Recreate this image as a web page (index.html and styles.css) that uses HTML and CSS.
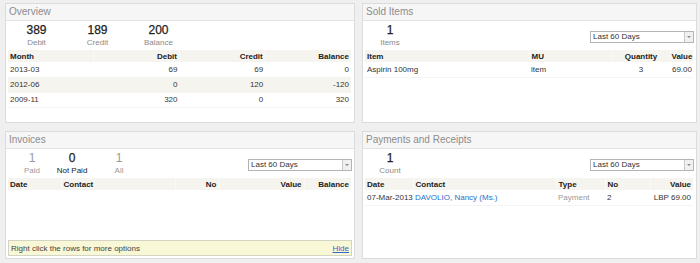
FILE: index.html
```html
<!DOCTYPE html>
<html lang="en">
<head>
    <meta charset="UTF-8">
    <title>Dashboard</title>
    <link rel="stylesheet" href="styles.css">
</head>
<body>
    <div class="dashboard">
        <!-- Overview -->
        <section class="panel">
            <div class="panel-title">Overview</div>
            <div class="toolbar">
                <div class="stats stats-overview">
                    <div class="stat"><b>389</b><span>Debit</span></div>
                    <div class="stat"><b>189</b><span>Credit</span></div>
                    <div class="stat"><b>200</b><span>Balance</span></div>
                </div>
            </div>
            <table class="grid grid-overview">
                <thead>
                    <tr><th>Month</th><th class="num">Debit</th><th class="num">Credit</th><th class="num">Balance</th></tr>
                </thead>
                <tbody>
                    <tr><td>2013-03</td><td class="num">69</td><td class="num">69</td><td class="num">0</td></tr>
                    <tr class="alt"><td>2012-06</td><td class="num">0</td><td class="num">120</td><td class="num">-120</td></tr>
                    <tr><td>2009-11</td><td class="num">320</td><td class="num">0</td><td class="num">320</td></tr>
                </tbody>
            </table>
        </section>

        <!-- Sold Items -->
        <section class="panel">
            <div class="panel-title">Sold Items</div>
            <div class="toolbar">
                <div class="stats stats-single">
                    <div class="stat"><b>1</b><span>Items</span></div>
                </div>
                <div class="select"><span>Last 60 Days</span><i></i></div>
            </div>
            <table class="grid grid-sold">
                <colgroup><col class="c-item"><col class="c-mu"><col class="c-qty"><col></colgroup>
                <thead>
                    <tr><th>Item</th><th>MU</th><th class="mid">Quantity</th><th class="num">Value</th></tr>
                </thead>
                <tbody>
                    <tr><td>Aspirin 100mg</td><td>item</td><td class="mid">3</td><td class="num">69.00</td></tr>
                </tbody>
            </table>
        </section>

        <!-- Invoices -->
        <section class="panel">
            <div class="panel-title">Invoices</div>
            <div class="toolbar">
                <div class="stats stats-invoices">
                    <div class="stat stat-paid"><b>1</b><span>Paid</span></div>
                    <div class="stat stat-notpaid active"><b>0</b><span>Not Paid</span></div>
                    <div class="stat stat-all"><b>1</b><span>All</span></div>
                </div>
                <div class="select"><span>Last 60 Days</span><i></i></div>
            </div>
            <table class="grid grid-invoices">
                <colgroup><col class="c-date"><col class="c-contact"><col class="c-no"><col class="c-value"><col></colgroup>
                <thead>
                    <tr><th>Date</th><th>Contact</th><th class="num">No</th><th class="num">Value</th><th class="num">Balance</th></tr>
                </thead>
            </table>
            <div class="hint">
                <span>Right click the rows for more options</span>
                <a href="#">Hide</a>
            </div>
        </section>

        <!-- Payments and Receipts -->
        <section class="panel">
            <div class="panel-title">Payments and Receipts</div>
            <div class="toolbar">
                <div class="stats stats-single">
                    <div class="stat"><b>1</b><span>Count</span></div>
                </div>
                <div class="select"><span>Last 60 Days</span><i></i></div>
            </div>
            <table class="grid grid-payments">
                <colgroup><col class="c-date"><col class="c-contact"><col class="c-type"><col class="c-no"><col></colgroup>
                <thead>
                    <tr><th>Date</th><th>Contact</th><th>Type</th><th>No</th><th class="num">Value</th></tr>
                </thead>
                <tbody>
                    <tr><td>07-Mar-2013</td><td><a href="#">DAVOLIO, Nancy (Ms.)</a></td><td class="muted">Payment</td><td>2</td><td class="num">LBP 69.00</td></tr>
                </tbody>
            </table>
        </section>
    </div>
</body>
</html>
```

FILE: styles.css
```css
/* Base */
* {
    margin: 0;
    padding: 0;
    box-sizing: border-box;
}
body {
    background: #efefef;
    color: #222;
    font-family: "Liberation Sans", Arial, sans-serif;
    font-size: 8px;
}

/* Layout */
.dashboard {
    display: grid;
    grid-template-columns: 350px 335px;
    grid-template-rows: 120px 128px;
    column-gap: 7px;
    row-gap: 8px;
    padding: 3px 0 0 5px;
}

.panel {
    background: #fff;
    border: 1px solid #dcdcdc;
    display: flex;
    flex-direction: column;
}

.panel-title {
    height: 17px;
    line-height: 16px;
    padding-left: 3px;
    background: #f6f6f6;
    border-bottom: 1px solid #e2e2e2;
    color: #8c8c8c;
    font-size: 10px;
}

/* Stats + filter */
.toolbar {
    display: flex;
    justify-content: space-between;
    align-items: flex-start;
    height: 29px;
    padding: 2px 2px 0 0;
}

.stats {
    display: flex;
}
.stat {
    display: flex;
    flex-direction: column;
    align-items: center;
    width: 61px;
}
.stat b {
    font-size: 12px;
    line-height: 14px;
    font-weight: normal;
    color: #222;
    -webkit-text-stroke: 0.25px #222;
}
.stat span {
    font-size: 8px;
    line-height: 11px;
    color: #8a8a8a;
}

.stats-single .stat {
    width: 50px;
    margin-left: 2px;
}
.stats-invoices {
    padding-left: 4px;
}
.stat-paid { width: 44px; }
.stat-notpaid { width: 36px; }
.stat-all { width: 58px; }
.stats-invoices .stat b,
.stats-invoices .stat span {
    color: #999;
    -webkit-text-stroke: 0;
}
.stats-invoices .active b {
    color: #222;
    -webkit-text-stroke: 0.25px #222;
}
.stats-invoices .active span {
    color: #222;
}

/* Dropdown */
.select {
    display: flex;
    width: 104px;
    height: 12px;
    margin-top: 8px;
    border: 1px solid #b4b4b4;
    background: #fff;
}
.select span {
    flex: 1;
    padding-left: 2px;
    line-height: 10px;
    font-size: 8px;
    color: #333;
}
.select i {
    width: 9px;
    border-left: 1px solid #c8c8c8;
    background: #f0f0f0;
    position: relative;
}
.select i::after {
    content: "";
    position: absolute;
    left: 2px;
    top: 4px;
    border-left: 2px solid transparent;
    border-right: 2px solid transparent;
    border-top: 2px solid #888;
}

/* Grids */
.grid {
    width: calc(100% - 5px);
    margin: 0 2px;
    border-collapse: collapse;
    table-layout: fixed;
}
.grid th {
    height: 12px;
    padding: 0 2px;
    background: #f6f4ee;
    border-left: 1px solid #fbfaf7;
    font-weight: bold;
    text-align: left;
    white-space: nowrap;
}
.grid th:first-child {
    border-left: 0;
}
.grid td {
    height: 15px;
    padding: 0 2px;
    border-bottom: 1px solid #f4f4f4;
    white-space: nowrap;
    color: #333;
}
.grid tr.alt td {
    background: #f6f4ee;
}
.grid .num {
    text-align: right;
}
.grid .mid {
    text-align: center;
}
.grid a {
    color: #2a6fc9;
    text-decoration: none;
}
.grid .muted {
    color: #999;
}

.c-item { width: 164px; }
.c-mu { width: 83px; }
.c-qty { width: 58px; }
.grid-sold th:last-child,
.grid-sold td:last-child {
    padding: 0 1px;
}

.grid-invoices .c-date { width: 53px; }
.grid-invoices .c-contact { width: 114px; }
.grid-invoices .c-no { width: 44px; }
.grid-invoices .c-value { width: 85px; }

.grid-payments .c-date { width: 48px; }
.grid-payments .c-contact { width: 143px; }
.grid-payments .c-type { width: 49px; }
.grid-payments .c-no { width: 45px; }

/* Hint bar */
.hint {
    display: flex;
    justify-content: space-between;
    align-items: center;
    margin: auto 2px 2px;
    height: 16px;
    padding: 0 2px;
    background: #f8f8d6;
    border: 1px solid #d4d4c4;
    color: #444;
}
.hint a {
    color: #3366cc;
}
```
